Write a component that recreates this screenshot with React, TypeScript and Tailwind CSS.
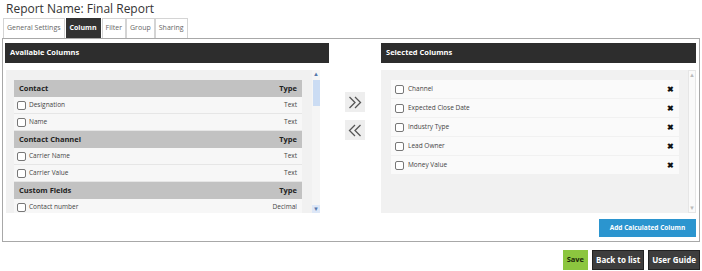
import React from "react";

const font = { fontFamily: '"Open Sans", "Noto Sans", sans-serif' };

function Box() {
  return <span className="inline-block w-[9px] h-[9px] border border-[#777] rounded-[2px] bg-white shrink-0" />;
}

function GroupHead({ label }: { label: string }) {
  return (
    <div className="flex items-center justify-between h-[17px] bg-[#c2c2c2] px-[5px] text-[7.5px] font-bold text-[#222]">
      <span>{label}</span>
      <span>Type</span>
    </div>
  );
}

function Row({ label, type }: { label: string; type: string }) {
  return (
    <div className="flex items-center justify-between h-[17px] bg-[#f7f7f7] border-b border-[#e6e6e6] pl-[3px] pr-[5px] text-[6.5px] text-[#444]">
      <span className="flex items-center gap-[3px]">
        <Box />
        {label}
      </span>
      <span>{type}</span>
    </div>
  );
}

function SelRow({ label }: { label: string }) {
  return (
    <div className="flex items-center justify-between h-[18px] bg-[#fafafa] mb-[1px] pl-[4px] pr-[5px] text-[6.5px] text-[#444]">
      <span className="flex items-center gap-[4px]">
        <Box />
        {label}
      </span>
      <span className="text-[8px] font-bold text-[#111] leading-none">✖</span>
    </div>
  );
}

function Chevrons({ dir }: { dir: "r" | "l" }) {
  return (
    <svg width="14" height="13" viewBox="0 0 14 13" fill="none" stroke="#555" strokeWidth="1.3">
      {dir === "r" ? (
        <>
          <path d="M1.5 1l5.5 5.5-5.5 5.5" />
          <path d="M7 1l5.5 5.5L7 12" />
        </>
      ) : (
        <>
          <path d="M7 1L1.5 6.5 7 12" />
          <path d="M12.5 1L7 6.5l5.5 5.5" />
        </>
      )}
    </svg>
  );
}

export default function App() {
  const tabs = ["General Settings", "Column", "Filter", "Group", "Sharing"];
  return (
    <div className="w-[702px] h-[271px] bg-white overflow-hidden" style={font}>
      <div className="h-[18px] pl-[6px] pt-[1px] text-[12px] leading-[16px] text-[#333]">Report Name: Final Report</div>
      <div className="flex h-[20px] pl-[3px]">
        {tabs.map((t) => (
          <div
            key={t}
            className={
              t === "Column"
                ? "flex items-center px-[4px] mx-[1px] bg-[#333] text-white font-bold text-[7px]"
                : "flex items-center px-[3px] border border-b-0 border-[#d4d4d4] text-[#666] text-[7px]"
            }
          >
            {t}
          </div>
        ))}
      </div>
      <div className="mx-[2px] h-[204px] border border-[#a8a8a8] pt-[4px] flex">
        <div className="ml-[2px] w-[324px] flex flex-col">
          <div className="h-[20px] bg-[#2d2d2d] text-white font-bold text-[7.5px] flex items-center pl-[5px]">Available Columns</div>
          <div className="mt-[7px] ml-[1px] w-[314px] h-[143px] bg-[#f1f1f1] flex overflow-hidden">
            <div className="flex-1 pl-[8px] pr-[10px] pt-[10px]">
              <GroupHead label="Contact" />
              <Row label="Designation" type="Text" />
              <Row label="Name" type="Text" />
              <GroupHead label="Contact Channel" />
              <Row label="Carrier Name" type="Text" />
              <Row label="Carrier Value" type="Text" />
              <GroupHead label="Custom Fields" />
              <Row label="Contact number" type="Decimal" />
            </div>
            <div className="w-[8px] bg-[#f5f5f5] flex flex-col items-center">
              <div className="h-[8px] text-[6px] leading-[8px] text-[#5577aa]">▲</div>
              <div className="w-[7px] h-[26px] mt-[2px] bg-[#cbdcf3]" />
              <div className="flex-1" />
              <div className="w-[8px] h-[8px] bg-[#dde7f7] text-[6px] leading-[8px] text-center text-[#5577aa]">▼</div>
            </div>
          </div>
        </div>
        <div className="w-[52px] flex flex-col items-center pt-[49px] gap-[8px]">
          <div className="w-[20px] h-[20px] bg-[#eeeeee] flex items-center justify-center">
            <Chevrons dir="r" />
          </div>
          <div className="w-[20px] h-[20px] bg-[#eeeeee] flex items-center justify-center">
            <Chevrons dir="l" />
          </div>
        </div>
        <div className="w-[315px] flex flex-col">
          <div className="h-[20px] bg-[#2d2d2d] text-white font-bold text-[7.5px] flex items-center pl-[5px]">Selected Columns</div>
          <div className="mt-[7px] h-[143px] bg-[#f1f1f1] flex">
            <div className="flex-1 pl-[10px] pr-[9px] pt-[10px]">
              <SelRow label="Channel" />
              <SelRow label="Expected Close Date" />
              <SelRow label="Industry Type" />
              <SelRow label="Lead Owner" />
              <SelRow label="Money Value" />
            </div>
            <div className="w-[8px] bg-[#fafafa] border border-[#e6e6e6] flex flex-col justify-between items-center text-[6px] leading-[8px] text-[#bbb]">
              <span>▲</span>
              <span>▼</span>
            </div>
          </div>
          <div className="flex justify-end mt-[6px]">
            <div className="w-[97px] h-[18px] bg-[#2b95cf] text-white font-bold text-[6.5px] whitespace-nowrap flex items-center justify-center">Add Calculated Column</div>
          </div>
        </div>
      </div>
      <div className="flex justify-end gap-[4px] pr-[2px] mt-[8px]">
        <div className="h-[20px] px-[4px] bg-[#8cc63f] text-[#1c2a0a] font-bold text-[7.5px] flex items-center">Save</div>
        <div className="h-[20px] px-[3px] bg-[#3d3d3d] border border-[#222] text-white font-bold text-[8px] flex items-center">Back to list</div>
        <div className="h-[20px] px-[3px] bg-[#3d3d3d] border border-[#222] text-white font-bold text-[8px] flex items-center">User Guide</div>
      </div>
    </div>
  );
}
